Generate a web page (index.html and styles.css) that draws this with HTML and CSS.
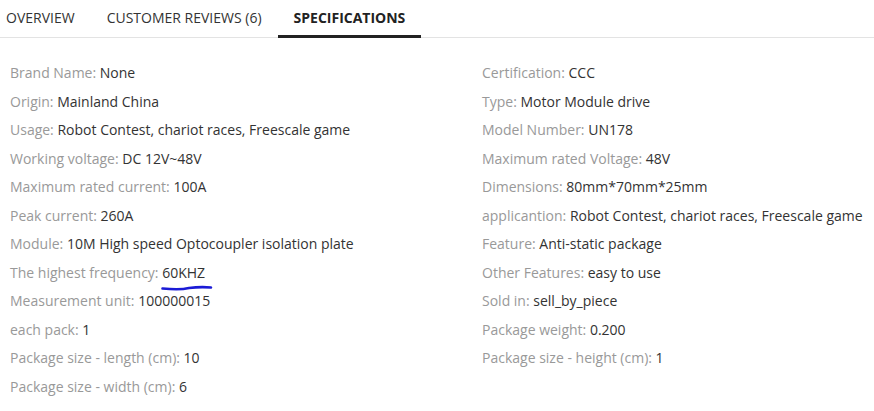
FILE: index.html
```html
<!DOCTYPE html>
<html>
<head>
<meta charset="utf-8">
<link rel="stylesheet" href="styles.css">
</head>
<body>
<div class="tabs">
  <div class="tab first">OVERVIEW</div>
  <div class="tab">CUSTOMER REVIEWS (6)</div>
  <div class="tab active">SPECIFICATIONS</div>
</div>
<div class="specs">
  <ul class="col">
    <li><span class="k">Brand Name:</span> <span class="v">None</span></li>
    <li><span class="k">Origin:</span> <span class="v">Mainland China</span></li>
    <li><span class="k">Usage:</span> <span class="v">Robot Contest, chariot races, Freescale game</span></li>
    <li><span class="k">Working voltage:</span> <span class="v">DC 12V~48V</span></li>
    <li><span class="k">Maximum rated current:</span> <span class="v">100A</span></li>
    <li><span class="k">Peak current:</span> <span class="v">260A</span></li>
    <li><span class="k">Module:</span> <span class="v">10M High speed Optocoupler isolation plate</span></li>
    <li><span class="k">The highest frequency:</span> <span class="v marked">60KHZ<svg class="scribble" width="52" height="8" viewBox="0 0 52 8"><path d="M1.5 4.5 C 12 5.5, 22 5.5, 28 4 C 36 3, 44 3, 50 3.5" fill="none" stroke="#1b1bd6" stroke-width="2.6" stroke-linecap="round"/></svg></span></li>
    <li><span class="k">Measurement unit:</span> <span class="v">100000015</span></li>
    <li><span class="k">each pack:</span> <span class="v">1</span></li>
    <li><span class="k">Package size - length (cm):</span> <span class="v">10</span></li>
    <li><span class="k">Package size - width (cm):</span> <span class="v">6</span></li>
  </ul>
  <ul class="col">
    <li><span class="k">Certification:</span> <span class="v">CCC</span></li>
    <li><span class="k">Type:</span> <span class="v">Motor Module drive</span></li>
    <li><span class="k">Model Number:</span> <span class="v">UN178</span></li>
    <li><span class="k">Maximum rated Voltage:</span> <span class="v">48V</span></li>
    <li><span class="k">Dimensions:</span> <span class="v">80mm*70mm*25mm</span></li>
    <li><span class="k">applicantion:</span> <span class="v">Robot Contest, chariot races, Freescale game</span></li>
    <li><span class="k">Feature:</span> <span class="v">Anti-static package</span></li>
    <li><span class="k">Other Features:</span> <span class="v">easy to use</span></li>
    <li><span class="k">Sold in:</span> <span class="v">sell_by_piece</span></li>
    <li><span class="k">Package weight:</span> <span class="v">0.200</span></li>
    <li><span class="k">Package size - height (cm):</span> <span class="v">1</span></li>
  </ul>
</div>
</body>
</html>
```
FILE: styles.css
```css
* { box-sizing: border-box; }
body {
  margin: 0;
  background: #fff;
  font-family: "Open Sans", "Liberation Sans", sans-serif;
  color: #333;
}
.tabs {
  display: flex;
  height: 38px;
  border-bottom: 1px solid #e3e3e3;
}
.tab {
  padding: 0 16px;
  height: 38px;
  line-height: 35px;
  font-size: 14px;
  color: #333;
  border-bottom: 3px solid transparent;
  margin-bottom: -1px;
}
.tab.first { padding-left: 6px; }
.tab.active {
  font-weight: 700;
  color: #222;
  border-bottom-color: #222;
}
.specs {
  display: grid;
  grid-template-columns: 472px 1fr;
  padding: 21px 0 0 10px;
}
.col {
  list-style: none;
  margin: 0;
  padding: 0;
}
.col li {
  height: 28.5px;
  line-height: 28.5px;
  font-size: 14px;
  white-space: nowrap;
}
.k { color: #999; }
.v { color: #333; }
.marked { position: relative; }
.scribble {
  position: absolute;
  left: -1px;
  top: 21px;
}
```
